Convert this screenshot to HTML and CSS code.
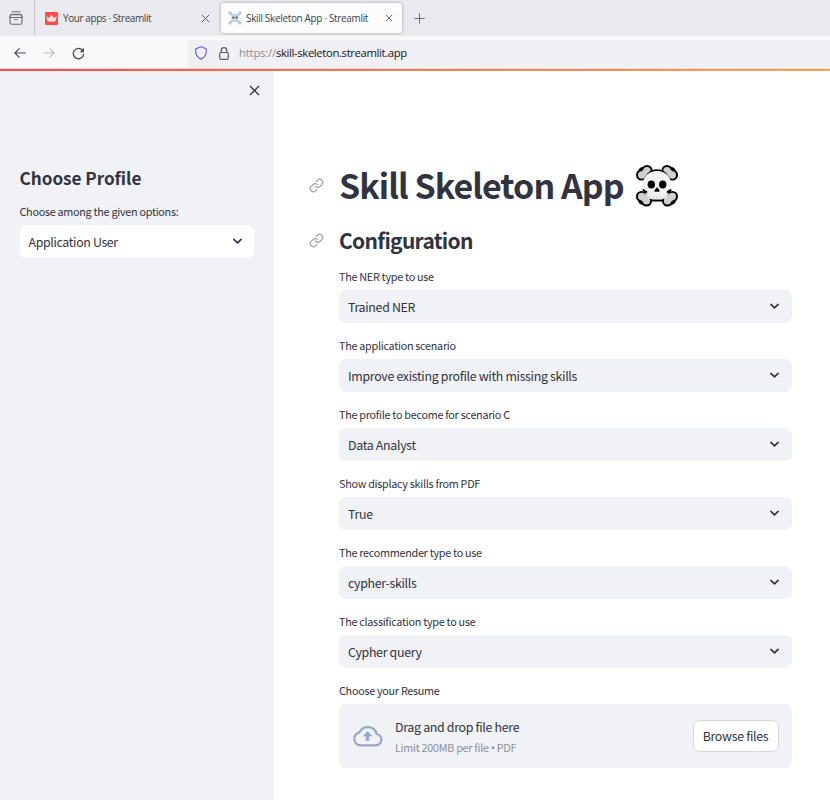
FILE: index.html
```html
<!DOCTYPE html>
<html lang="en">
<head>
<meta charset="utf-8">
<title>Skill Skeleton App · Streamlit</title>
<link rel="stylesheet" href="styles.css">
</head>
<body>
<svg class="defs" width="0" height="0">
  <symbol id="chevron" viewBox="0 0 8 8"><path d="M.8 2.200 4 5.200 7.200 2.200" fill="none" stroke="#31333f" stroke-width="1.5" stroke-linecap="round" stroke-linejoin="round"/></symbol>
  <symbol id="cross" viewBox="0 0 10 10"><path d="M1 1l8 8M9 1l-8 8" fill="none" stroke="currentColor" stroke-width="1.1"/></symbol>
  <symbol id="link" viewBox="0 0 24 24"><g fill="none" stroke="#a1a2a8" stroke-width="2" stroke-linecap="round" stroke-linejoin="round"><path d="M10 13a5 5 0 0 0 7.54.54l3-3a5 5 0 0 0-7.07-7.07l-1.72 1.71"/><path d="M14 11a5 5 0 0 0-7.54-.54l-3 3a5 5 0 0 0 7.07 7.07l1.71-1.71"/></g></symbol>
  <symbol id="skull" viewBox="0 0 42 42">
    <g stroke-linecap="round" stroke-linejoin="round">
      <path d="M7 7 35 35M35 7 7 35" stroke="#000" stroke-width="10"/>
      <g fill="#000"><circle cx="11" cy="5.500" r="5.500"/><circle cx="5.500" cy="10" r="5.500"/><circle cx="31" cy="5.500" r="5.500"/><circle cx="36.500" cy="10" r="5.500"/><circle cx="5.500" cy="31.500" r="5.500"/><circle cx="10.500" cy="36" r="5.500"/><circle cx="36.500" cy="31.500" r="5.500"/><circle cx="31.500" cy="36" r="5.500"/></g>
      <path d="M8 8 34 34M34 8 8 34" stroke="#c8c8c8" stroke-width="6"/>
      <g fill="#d0d0d0"><circle cx="11" cy="5.700" r="3.700"/><circle cx="5.700" cy="10" r="3.700"/><circle cx="31" cy="5.700" r="3.700"/><circle cx="36.300" cy="10" r="3.700"/><circle cx="5.700" cy="31.500" r="3.700"/><circle cx="10.500" cy="35.800" r="3.700"/><circle cx="36.300" cy="31.500" r="3.700"/><circle cx="31.500" cy="35.800" r="3.700"/></g>
      <path d="M9.500 13Q13.500 5.200 21 5.200T32.500 13M7.500 25q.5 1 2.500 2M34.500 25q-.5 1-2.500 2M15 35.500h12" fill="none" stroke="#000" stroke-width="2"/>
      <path d="M21 6C12.500 6 7 11.500 7 19.500c0 4 1.500 5.500 4.500 7v5.500q1 2 4 2h11q3 0 4-2V26.500c3-1.500 4.500-3 4.500-7C35 11.500 29.500 6 21 6z" fill="#f2f2f2"/>
      <path d="M14 31v2.500M17.500 31.500v2.500M21 31.500v2.500M24.500 31.500v2.500M28 31v2.500" stroke="#cfcfcf" stroke-width="1"/>
    </g>
    <ellipse cx="15.300" cy="19.500" rx="3.700" ry="3.900"/><ellipse cx="26.700" cy="19.500" rx="3.700" ry="3.900"/><path d="M21 22.200q3 3 2.500 4.300-1 .7-2.500 0-1.500.7-2.500 0Q18 25.200 21 22.200z"/>
  </symbol>
</svg>
<div class="tabs">
  <div class="view"><svg width="14" height="14" viewBox="0 0 14 14" fill="none" stroke="#6b6b75" stroke-width="1.1" stroke-linecap="round"><path d="M3 .8h8"/><rect x="1" y="3.800" width="12" height="9.400" rx="1.800"/><path d="M1.200 6.500V4.800a1.500 1.500 0 0 1 1.500-1.500h8.600a1.500 1.500 0 0 1 1.500 1.500v1.700zM5.800 8.500h2.400"/></svg></div>
  <div class="tab">
    <svg width="13" height="13" viewBox="0 0 13 13"><rect width="13" height="13" rx="1" fill="#ff4b4b"/><path d="M1.200 4.200 4 6l2.500-3.200L9 6l2.800-1.800-1.300 5q-4 .9-8 0z" fill="#ffe3e3"/></svg>
    <span class="tab-title t1">Your apps · Streamlit</span><svg class="close" width="9" height="9"><use href="#cross"/></svg>
  </div>
  <div class="tab active">
    <svg width="14" height="14" viewBox="0 0 14 14"><path d="M2 2l10 10M12 2 2 12" stroke="#b9cbd6" stroke-width="2.300"/><g fill="#b9cbd6"><circle cx="2" cy="2" r="1.700"/><circle cx="12" cy="2" r="1.700"/><circle cx="2" cy="12" r="1.700"/><circle cx="12" cy="12" r="1.700"/></g><path d="M7 2.500a4 4 0 0 0-2.500 7V11h5V9.500A4 4 0 0 0 7 2.500z" fill="#c7d4dc"/><circle cx="5.400" cy="6.600" r="1.100" fill="#455a68"/><circle cx="8.600" cy="6.600" r="1.100" fill="#455a68"/></svg>
    <span class="tab-title t2">Skill Skeleton App · Streamlit</span><svg class="close" width="8" height="8"><use href="#cross"/></svg>
  </div>
  <svg class="plus" width="11" height="11" viewBox="0 0 11 11"><path d="M5.500.3v10.400M.3 5.500h10.400" stroke="#6d6d77" stroke-width="1"/></svg>
</div>
<div class="toolbar">
  <svg width="12" height="12" viewBox="0 0 12 12" fill="none" stroke="#4b4b55" stroke-width="1.200"><path d="M11.700 6H.9M5.500 1.300.9 6l4.600 4.700"/></svg>
  <svg width="12" height="12" viewBox="0 0 12 12" fill="none" stroke="#bdbdc4" stroke-width="1.200"><path d="M.3 6h10.800M6.500 1.300 11.100 6l-4.600 4.700"/></svg>
  <svg width="13" height="13" viewBox="0 0 13 13" fill="none" stroke="#4b4b55" stroke-width="1.300"><path d="M10.600 3.300A5.200 5.200 0 1 0 11.700 7"/><path d="M12 .8v4.400H7.600z" fill="#4b4b55" stroke="none"/></svg>
  <div class="address">
    <svg width="12" height="14" viewBox="0 0 12 14" fill="none"><defs><linearGradient id="sh" x1="1" y1="0" x2="0" y2="1"><stop stop-color="#9059ff"/><stop offset="1" stop-color="#3f68d8"/></linearGradient></defs><path d="M6 .8 11.300 2.900v2.700c0 3.400-2 6-5.300 7.500C2.700 11.600.7 9 .7 5.600V2.900z" stroke="url(#sh)" stroke-width="1.200" stroke-linejoin="round"/></svg>
    <svg width="10" height="13" viewBox="0 0 10 13" fill="none" stroke="#5b5b66" stroke-width="1.200"><rect x=".7" y="5.500" width="8.600" height="6.800" rx="1.300"/><path d="M2.300 5.500V3.400a2.700 2.700 0 0 1 5.400 0v2.100"/></svg>
    <span class="url"><span class="scheme">https://</span>skill-skeleton.streamlit.app</span>
  </div>
</div>
<div class="stripe"></div>
<div class="app">
  <aside>
    <svg class="shut" width="11" height="11" viewBox="0 0 11 11"><path d="M1 1l9 9M10 1l-9 9" stroke="#31333f" stroke-width="1.300"/></svg>
    <h3>Choose Profile</h3>
    <label>Choose among the given options:</label>
    <div class="select"><span>Application User</span><svg width="9" height="9"><use href="#chevron"/></svg></div>
  </aside>
  <main>
    <h1><svg class="anchor" width="15" height="15"><use href="#link"/></svg><span>Skill Skeleton App</span><svg class="skull" width="42" height="42"><use href="#skull"/></svg></h1>
    <h2><svg class="anchor" width="15" height="15"><use href="#link"/></svg><span>Configuration</span></h2>
    <div class="field"><label>The NER type to use</label><div class="select"><span>Trained NER</span><svg width="9" height="9"><use href="#chevron"/></svg></div></div>
    <div class="field"><label>The application scenario</label><div class="select"><span>Improve existing profile with missing skills</span><svg width="9" height="9"><use href="#chevron"/></svg></div></div>
    <div class="field"><label>The profile to become for scenario C</label><div class="select"><span>Data Analyst</span><svg width="9" height="9"><use href="#chevron"/></svg></div></div>
    <div class="field"><label>Show displacy skills from PDF</label><div class="select"><span>True</span><svg width="9" height="9"><use href="#chevron"/></svg></div></div>
    <div class="field"><label>The recommender type to use</label><div class="select"><span>cypher-skills</span><svg width="9" height="9"><use href="#chevron"/></svg></div></div>
    <div class="field"><label>The classification type to use</label><div class="select"><span>Cypher query</span><svg width="9" height="9"><use href="#chevron"/></svg></div></div>
    <div class="field"><label>Choose your Resume</label>
      <div class="drop">
        <svg width="31" height="22" viewBox="0 0 31 22"><path d="M8 20.300h15.500a5.700 5.700 0 0 0 1.200-11.300A9.200 9.200 0 0 0 7.500 7.300 6.600 6.600 0 0 0 8 20.300z" fill="none" stroke="#98a7c9" stroke-width="2.200"/><path d="M15.500 6.300l5 5h-3.200v4.400h-3.600v-4.400h-3.200z" fill="#98a7c9"/></svg>
        <div class="drop-text"><span>Drag and drop file here</span><span class="limit">Limit 200MB per file <span class="dot">•</span> PDF</span></div>
        <button>Browse files</button>
      </div>
    </div>
  </main>
</div>
</body>
</html>
```
FILE: styles.css
```css
* { box-sizing: border-box; }
body { margin: 0; width: 830px; height: 800px; overflow: hidden; background: #fff; color: #31333f; font-family: "Noto Sans CJK SC", "Noto Sans", sans-serif; }
svg { display: block; flex: none; }
.defs { position: absolute; }
span, label { white-space: nowrap; }

.tabs { display: flex; height: 36px; background: #eaeaee; font-family: "Open Sans", sans-serif; color: #3f3f49; }
.view { width: 35px; display: flex; align-items: center; padding-left: 9px; border-right: 1px solid #c8c8ce; }
.tab { display: flex; align-items: center; width: 176px; padding-left: 10px; }
.tab-title { font-size: 10px; line-height: 14px; margin-left: 5px; }
.t1 { letter-spacing: -.42px; }
.t2 { letter-spacing: -.34px; }
.tab .close { margin-left: auto; margin-right: 1px; color: #5b5b66; }
.tab.active { margin: 3px 0 3px 10px; width: 181px; padding: 0 9px 0 7px; background: #fcfcfd; border-radius: 3px; box-shadow: 0 0 3px rgba(0, 0, 0, .35); }
.tab.active .tab-title { margin-left: 4px; }
.tab.active .close { margin-right: 0; }
.plus { margin: 13px 0 0 12px; }

.toolbar { display: flex; align-items: center; height: 33px; padding: 2px 0 0 14px; gap: 17px; background: #f9f9fb; border-bottom: 1px solid #dcdce0; }
.address { flex: 1; display: flex; align-items: center; height: 27px; margin-left: 86px; padding-left: 7px; background: #f0f0f4; border-radius: 3px 0 0 3px; font-family: "Open Sans", sans-serif; color: #15141a; }
.address svg + svg { margin-left: 12px; }
.url { font-size: 11.3px; margin-left: 10px; line-height: 16px; letter-spacing: -.36px; }
.scheme { color: #8b8b94; letter-spacing: -.2px; }
.stripe { height: 2px; background: linear-gradient(90deg, #ff4b4b, #f7a651); }

.app { display: flex; height: 729px; }
aside { width: 274px; background: #f0f2f6; padding: 14px 20px 0 19.500px; }
.shut { margin-left: auto; margin-right: -6px; }
h1, h2, h3 { margin: 0; font-weight: 700; }
h3 { font-size: 17.200px; line-height: 26px; margin-top: 69px; letter-spacing: -.05px; }
label { display: block; font-size: 10.800px; line-height: 16px; letter-spacing: -.28px; }
aside label { margin: 12px 0 6px; }
.select { display: flex; align-items: center; justify-content: space-between; height: 33px; padding: 0 12.500px 0 9px; border-radius: 7px; background: #f0f2f6; font-size: 12.400px; line-height: 20px; letter-spacing: -.32px; }
main .select span { padding-top: 1px; }
aside .select { background: #fff; }
aside .select span { letter-spacing: -.36px; }

main { flex: 1; padding: 92px 38.500px 0 65px; }
h1 { display: flex; align-items: center; height: 44px; margin-left: -30px; font-size: 34px; line-height: 44px; letter-spacing: -.95px; }
h2 { display: flex; align-items: center; height: 30px; margin: 18px 0 12.700px -30px; font-size: 21px; line-height: 30px; letter-spacing: -.7px; }
.anchor { margin-right: 15px; }
.skull { margin: 2px 0 0 12px; }
.field { height: 69px; }
.field label { margin-bottom: 6px; }
.drop { display: flex; align-items: center; height: 64px; padding: 0 13px; border-radius: 7px; background: #f0f2f6; }
.drop-text { display: flex; flex-direction: column; margin: 4px 0 0 12px; font-size: 12.400px; line-height: 20px; letter-spacing: -.32px; }
.limit { font-size: 10.800px; letter-spacing: -.28px; color: #8d8f98; }
.dot { font-family: "Noto Sans", sans-serif; }
.drop button { margin-left: auto; width: 86px; height: 32px; padding: 0; border: 1px solid #d6d7dc; border-radius: 7px; background: #fff; color: #31333f; font: 12.400px/20px "Noto Sans CJK SC", sans-serif; letter-spacing: -.3px; }
```
